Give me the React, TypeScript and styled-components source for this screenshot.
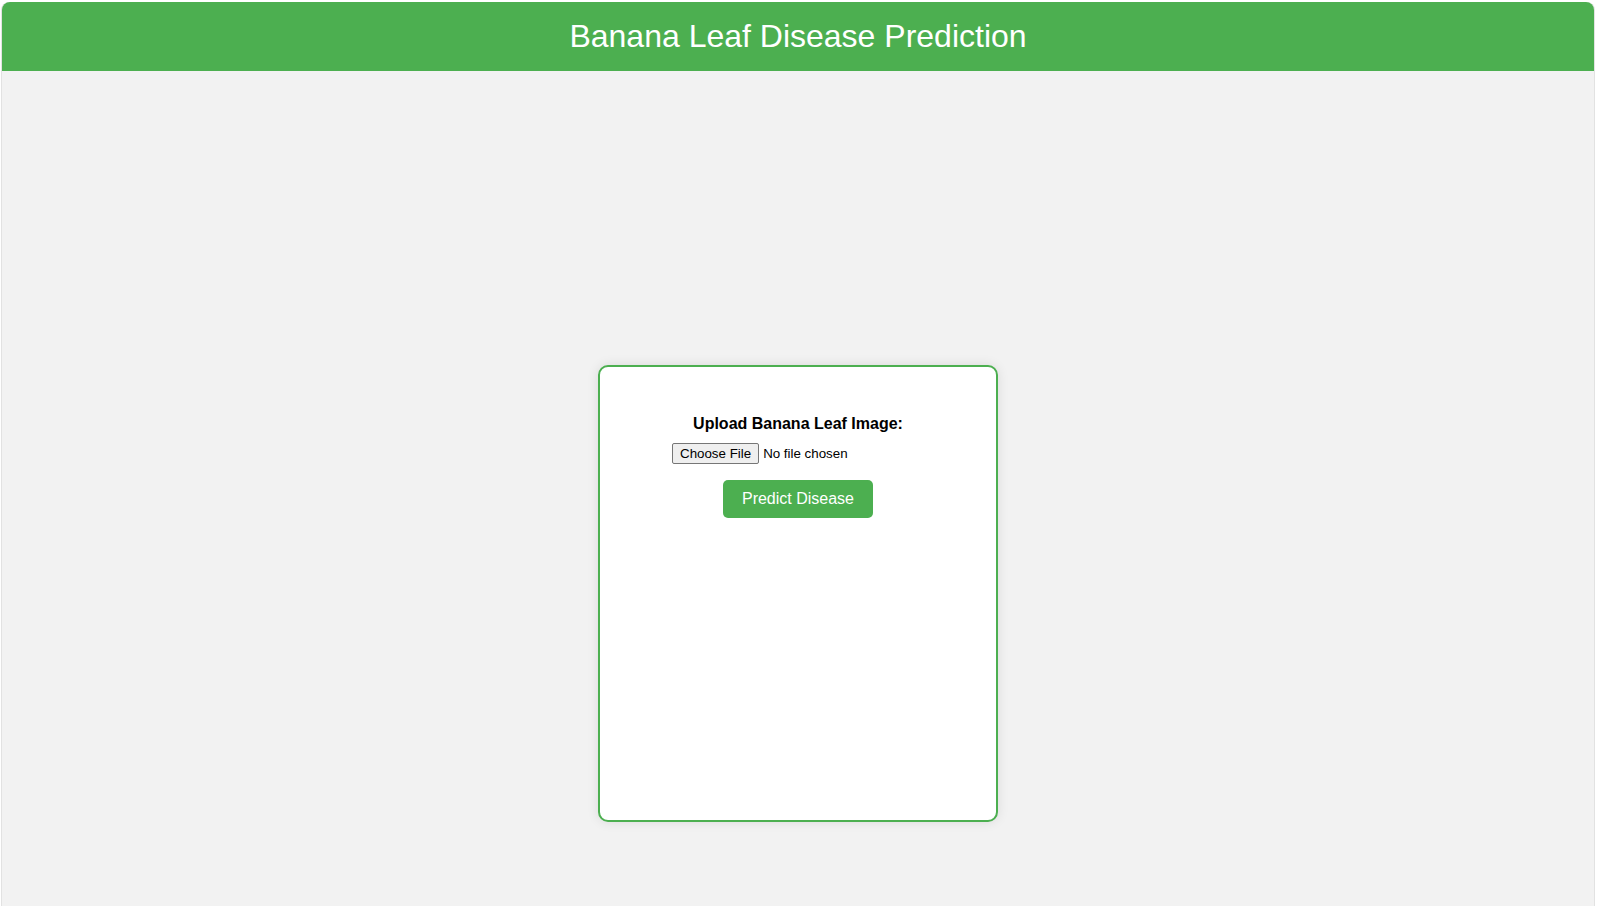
import React from 'react';
import styled, { createGlobalStyle } from 'styled-components';

const C = {
  green: '#4caf50',
  page: '#f2f2f2',
  frame: '#ffffff',
  edge: '#e2e2e2',
  text: '#000000',
} as const;

const GlobalStyle = createGlobalStyle`
  html, body {
    margin: 0;
    padding: 0;
    background: ${C.frame};
  }
  body {
    font-family: Arial, "Liberation Sans", Helvetica, sans-serif;
  }
`;

const Window = styled.div`
  margin: 2px 4px 0 2px;
  min-height: calc(100vh - 2px);
  background: ${C.page};
  border-radius: 8px 8px 0 0;
  box-shadow: -1px 0 0 ${C.edge}, 1px 0 0 ${C.edge};
  overflow: hidden;
  display: flex;
  flex-direction: column;
`;

const Header = styled.header`
  background: ${C.green};
  color: #fff;
  text-align: center;
  padding: 16px 0;
`;

const Title = styled.h1`
  margin: 0;
  font-size: 32px;
  font-weight: 400;
`;

const Main = styled.main`
  display: flex;
  justify-content: center;
  padding-top: 294px;
`;

const Card = styled.section`
  box-sizing: border-box;
  width: 400px;
  height: 457px;
  background: #fff;
  border: 2px solid ${C.green};
  border-radius: 10px;
  box-shadow: 0 0 12px rgba(0, 0, 0, 0.1);
  padding: 48px 20px 20px;
  display: flex;
  flex-direction: column;
  align-items: center;
`;

const Form = styled.form`
  display: flex;
  flex-direction: column;
  align-items: center;
`;

const Label = styled.label`
  font-size: 16px;
  font-weight: 700;
  color: ${C.text};
  margin-bottom: 10px;
`;

const FileInput = styled.input`
  font-family: Arial, "Liberation Sans", sans-serif;
  font-size: 13.33px;
  width: 252px;
  margin: 0 0 16px;
  color: ${C.text};

  &::file-selector-button {
    font-family: inherit;
    font-size: 13.33px;
    padding: 2px 7px;
    margin-right: 4px;
    background: #efefef;
    border: 1px solid #767676;
    border-radius: 2px;
    color: #000;
  }
`;

const Button = styled.button`
  background: ${C.green};
  color: #fff;
  border: none;
  border-radius: 5px;
  padding: 10px 19px;
  font-family: Arial, "Liberation Sans", sans-serif;
  font-size: 16px;
  cursor: pointer;
`;

export default function App() {
  return (
    <>
      <GlobalStyle />
      <Window>
        <Header>
          <Title>Banana Leaf Disease Prediction</Title>
        </Header>
        <Main>
          <Card>
            <Form onSubmit={(e) => e.preventDefault()}>
              <Label htmlFor="leaf">Upload Banana Leaf Image:</Label>
              <FileInput id="leaf" type="file" accept="image/*" />
              <Button type="submit">Predict Disease</Button>
            </Form>
          </Card>
        </Main>
      </Window>
    </>
  );
}
